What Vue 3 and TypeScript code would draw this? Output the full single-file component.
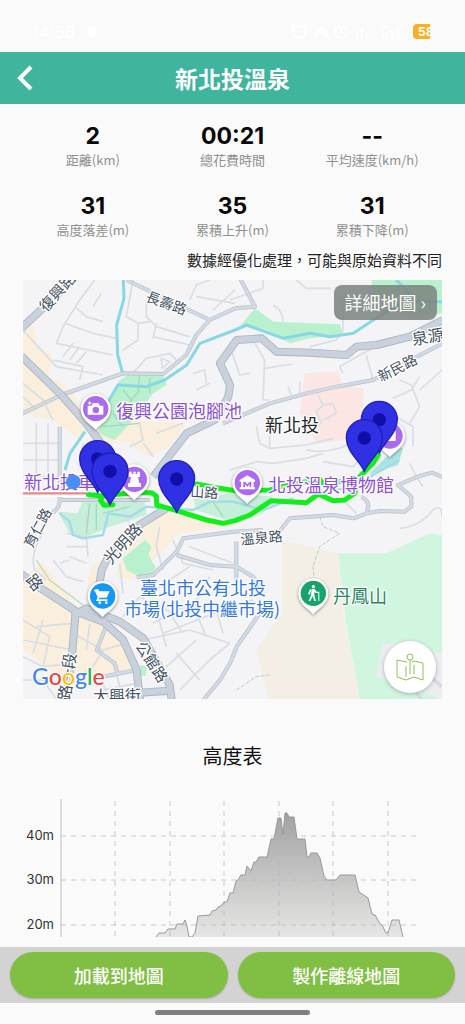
<script setup lang="ts">
interface Stat { value: string; label: string }
interface MapLabel { text: string; x: number; y: number; size: number; angle: number; kind: string }

const stats: Stat[] = [
  { value: '2', label: '距離(km)' },
  { value: '00:21', label: '總花費時間' },
  { value: '--', label: '平均速度(km/h)' },
  { value: '31', label: '高度落差(m)' },
  { value: '35', label: '累積上升(m)' },
  { value: '31', label: '累積下降(m)' },
]

const majorRoads: string[] = [
  'M-5 145L160-10',
  'M-5 228L115 345L190 430L245 505',
  'M1260 120L1161 170L1061 195L1001 200L971 225L861 218L761 215L716 175L641 180L591 250L621 315L616 350L575 420L491 460L391 590',
  'M430 685L341 740L261 820L236 870L228 920',
  'M-5 882L31 910L161 995L241 1025L301 1080L341 1170L351 1260',
  'M158 995L146 1140L128 1260',
  'M161 1000L191 985L291 1025L361 1075L440 1215L446 1260',
  'M351 1238L440 1232',
]

const mediumRoads: string[] = [
  'M-5 402L115 345L300 280L420 282L490 225L520 165L560 120L636 85',
  'M310 0L560 120',
  'M600 430L741 370L851 340L941 320L1051 300L1181 230L1260 190',
  'M1260 592L1226 578L1185 590L1125 615L1165 650L1165 680L1145 695L1071 693L1031 700L991 715L931 705L801 715L765 760',
  'M1031 695Q1045 665 1015 650',
  'M720 750L631 755L481 775L461 815L391 885L341 892',
  'M461 825L560 855L640 860L690 890L720 930',
  'M721 985L641 1100L621 1150L591 1200L541 1260',
  'M636 85L696 80L651 -5',
  'M110 440V660Q110 690 80 702L40 715',
  'M111 660H380',
  'M251 1035L221 1110L275 1150L285 1185',
  'M240 1190L330 1172',
  'M640 785V900',
]

const minorRoads: string[] = [
  'M0 150L100 260L240 285', 'M100 190L125 130L210 160L280 175', 'M120 140L170 60L215 0', 'M155 80L190 110L240 125',
  'M120 230L150 190M140 240L170 200M160 250L190 215', 'M100 190L270 225M90 240L180 260L170 300',
  'M330 0L310 110L345 130V180L300 210', 'M370 60V110L400 140L500 170M390 170L500 195M400 130L390 175', 'M345 130L380 125',
  'M320 290L370 235L440 220L470 250', 'M415 235L440 245L418 265Z', 'M500 60L520 15L560 0', 'M520 50L636 70M570 90L636 30',
  'M510 280L545 270L550 310M520 330L560 310', 'M210 80L235 40', 'M0 310L60 360L90 420M30 380L0 350',
  'M621 200L650 285L680 280M696 190L725 240L720 360M725 265L808 252M720 360H740',
  'M750 75Q780 90 780 125M795 320L805 345M830 305V340M960 280L950 260L1020 220L1060 200M1030 225L1050 300',
  'M621 60L680 40L720 25V0M820 0L850 25H925', 'M960 60V150L940 180L861 200',
  'M885 345L900 375L880 395L895 430L870 445M900 375L930 370L940 400L900 420',
  'M1160 430L1190 380L1165 315L1130 300M1190 330L1257 270M1110 355L1165 330L1190 290',
  'M700 440L710 490L740 505L850 495L930 475M740 440V500M850 510Q930 525 1000 480',
  'M621 570L700 545L750 550L850 535L900 520', 'M1170 500V440L1120 410',
  'M0 490H110M0 540H110M0 590H110M40 430V630M75 430V630',
  'M180 490L170 560M320 500L360 480L350 430M400 460L480 430M391 530L361 490',
  'M60 760Q20 820 35 870L70 900', 'M130 760L190 770L195 830M130 800H195M140 830L190 850M190 700V760',
  'M300 670L320 740M350 670V700', 'M410 740L400 800L420 870M450 780L480 850L570 870M500 800L630 850',
  'M90 840L130 890L180 905M110 850L140 840M290 850L300 940',
  'M361 950L440 900L500 860M300 1010L350 950L450 1000M390 1030L520 960L560 890M420 1060L600 990L690 960',
  'M360 1080L500 1050L620 1090M430 1160L520 1080M460 1120L530 1200M440 1000L480 1060M520 1000L550 1070M580 990L600 1060',
  'M470 1230L560 1140L620 1090M400 990L430 1100',
  'M0 1020L80 1070L60 1160M0 1080L150 1110M40 1040L150 1030M0 1130L60 1160L150 1150M0 1200L60 1200L100 1257',
  'M150 1060L240 1110L210 1160L180 1180M240 1110L310 1090M200 1030L190 1110M60 1020L30 1120',
  'M230 1190L260 1257M280 1180L300 1257M240 1230L340 1210',
  'M1160 550L1180 590L1200 620M1130 745Q1190 740 1230 690Q1257 670 1257 710',
  'M960 660L1000 700M900 545L990 560L1060 490',
]

const mapLabel = (text: string, x: number, y: number, size: number, angle: number, kind: string): MapLabel =>
  ({ text, x, y, size, angle, kind })

const labels: MapLabel[] = [
  mapLabel('復興路', 70, 98, 45, -48, 'road'),
  mapLabel('長壽路', 366, 62, 42, 20, 'road'),
  mapLabel('泉源', 1170, 196, 48, -10, 'road'),
  mapLabel('新民路', 1074, 306, 42, -27, 'road'),
  mapLabel('育仁路', 28, 806, 42, -62, 'road'),
  mapLabel('光明路', 264, 856, 48, -48, 'road'),
  mapLabel('山路', 501, 650, 42, 3, 'road'),
  mapLabel('溫泉路', 654, 794, 42, -5, 'road'),
  mapLabel('路', 6, 900, 48, 50, 'road'),
  mapLabel('公館路', 336, 1098, 45, 57, 'road'),
  mapLabel('路一段', 140, 1264, 48, -82, 'road'),
  mapLabel('大興街', 210, 1266, 48, -1, 'road'),
  mapLabel('新北投', 726, 456, 54, 0, 'town'),
  mapLabel('復興公園泡腳池', 279, 413, 54, 0, 'purple'),
  mapLabel('新北投車', 3, 628, 54, 0, 'purple'),
  mapLabel('北投溫泉博物館', 735, 637, 54, 0, 'purple'),
  mapLabel('臺北市公有北投', 351, 944, 54, 0, 'blue'),
  mapLabel('市場(北投中繼市場)', 303, 1008, 54, 0, 'blue'),
  mapLabel('丹鳳山', 930, 970, 54, 0, 'green'),
]

const pins = [[1069, 520], [1024, 575], [224, 638], [261, 675], [461, 698]]

const profile: number[][] = [
  [156, 937], [159, 933], [165, 933], [168, 929], [175, 929], [177, 924], [183, 924], [185, 920], [187, 926], [189, 937],
  [192, 937], [195, 933], [198, 916], [210, 915], [212, 911], [216, 910], [218, 907], [221, 906], [224, 902], [227, 902],
  [230, 893], [233, 893], [236, 881], [238, 880], [241, 875], [245, 875], [247, 866], [251, 871], [254, 862], [256, 862],
  [259, 857], [267, 857], [269, 848], [271, 839], [274, 839], [278, 818], [281, 818], [283, 835], [285, 813], [287, 813],
  [289, 817], [294, 817], [297, 839], [305, 839], [307, 857], [309, 857], [311, 853], [317, 853], [320, 858], [324, 876],
  [327, 880], [336, 880], [340, 875], [355, 875], [359, 892], [368, 898], [372, 914], [375, 915], [380, 924], [382, 925],
  [386, 933], [388, 933], [392, 920], [399, 920], [403, 937],
]
const linePath = 'M' + profile.map(p => p.join(' ')).join('L')
const gridX = [115, 170, 224, 279, 333, 388]
const gridY = [{ y: 836, label: '40m' }, { y: 880, label: '30m' }, { y: 925, label: '20m' }]
</script>

<template>
  <div class="page" lang="zh-Hant">
    <div class="status">
      <span class="clock">14:56</span>
      <svg class="dot" viewBox="0 0 10 12"><path d="M5 0a5 5 0 0 1 3 9v3H2V9a5 5 0 0 1 3-9z" /></svg>
      <svg class="indicators" viewBox="0 0 116 16" aria-hidden="true">
        <circle cx="8" cy="8" r="6" /><path d="M0 3l4-3M12 0l4 3M24 14l6-11 8 11M24 3l12 11" />
        <circle cx="50" cy="8" r="6" /><path d="M50 4v4l3 2M66 15V9M71 15V3M76 15V9M90 3h8M92 15v-4M96 15V9M101 15V6M107 15V3" />
      </svg>
      <span class="battery">58</span>
    </div>

    <header class="bar">
      <button class="back" type="button" aria-label="返回">
        <svg viewBox="0 0 16 26"><path d="M14 2L3 13l11 11" /></svg>
      </button>
      <h1>新北投溫泉</h1>
    </header>

    <main>
      <dl class="stats">
        <div v-for="s in stats" :key="s.label" class="stat">
          <dt>{{ s.label }}</dt>
          <dd>{{ s.value }}</dd>
        </div>
      </dl>
      <p class="note">數據經優化處理，可能與原始資料不同</p>

      <section class="map" aria-label="地圖">
        <svg class="canvas" viewBox="0 0 1257 1257">
          <rect width="1257" height="1257" fill="#f4f3f5" />
          <g fill="#f9efdc">
            <path d="M0 120L30 125L45 205L90 225L75 285L150 335L200 440L170 480L90 420L0 400z" />
            <path d="M300 420L490 430L440 500L380 530L300 480L240 500L220 450z" />
            <path d="M390 690L640 735L470 760L430 800L330 900L280 890L300 800z" />
            <path d="M60 850L161 985L241 1010L310 1080L330 1170L230 1190L110 1190L0 1110V890z" />
            <path d="M200 860L240 840L225 970L190 950z" />
          </g>
          <path d="M776 780L946 820L961 1000L1010 1257H736L701 1110L776 1000z" fill="#f3efe5" />
          <path d="M946 820H1090L1221 760L1257 766V1257H1011L971 1040z" fill="#d1f6e0" />
          <path d="M1070 1130L1080 1090H1110L1257 1120V1257L1060 1190z" fill="#ecedf0" />
          <path d="M846 280L946 275L956 315L1021 325V435L971 480L881 490L850 440L830 400z" fill="#fce6e3" />
          <g fill="#b9f1cf">
            <path d="M290 300L331 275L421 285L431 315L391 340L321 430L275 480L225 460L240 410L260 355z" />
            <path d="M641 150L696 85L751 125L951 133L961 165L861 175L801 190L731 150L681 135z" />
            <path d="M1046 0H1257V100L1170 110L1050 60z" />
            <path d="M180 660H365L370 705L260 740L180 775L140 760L105 695L165 700z" fill="#c5eedb" />
            <path d="M510 650L640 640L750 650L720 700L610 720L520 690z" fill="#c5eedb" />
            <path d="M300 835L366 780L386 800L376 825L400 865L370 900L310 870z" />
            <path d="M351 1155l20 3l-3 30l-20-3z" />
          </g>
          <path d="M1120 500L1140 505L1125 555L1050 580L1030 590L1090 530z" fill="#a9e4e2" />

          <g class="minor"><path v-for="d in minorRoads" :key="d" :d="d" /></g>
          <g class="park"><path d="M300 330L325 360L350 330M325 360L318 400M380 295V340M350 280L345 330M240 440L350 430M270 400L300 440M200 670L190 760M220 670V750M560 650L600 710M240 700L320 680" /></g>
          <g class="river">
            <path d="M301 0L303 55L281 135L284 225L299 280" />
            <path d="M241 390L285 315L370 320L425 300L491 255L531 190L636 150L671 135L781 175L861 160L921 170L991 160L1051 120L1121 75L1160 65L1257 65M1160 65V40L1120 0" />
            <path d="M186 455L141 520L126 570" />
            <path class="stream" d="M110 700L140 725L150 765L180 775L240 765L256 700L321 710L371 680L421 685L511 690L561 665L631 665L721 690L811 655M880 640L1000 620L1050 585L1130 540" />
          </g>
          <path d="M40 840L80 900L180 975" fill="none" stroke="#bfdcae" stroke-width="4" />
          <g class="trail"><path d="M890 710L900 740L950 760L920 780L890 800L870 860L880 950M640 1230L700 1190L740 1185" /></g>
          <g class="medium-edge"><path v-for="d in mediumRoads" :key="d" :d="d" /></g>
          <g class="medium"><path v-for="d in mediumRoads" :key="d" :d="d" /></g>
          <g class="major-edge"><path v-for="d in majorRoads" :key="d" :d="d" /></g>
          <g class="major"><path v-for="d in majorRoads" :key="d" :d="d" /></g>
          <path d="M1195 1257L1140 1190L1190 1160L1257 1220" fill="none" stroke="#d8dbe1" stroke-width="10" />

          <path d="M0 642H200" fill="none" stroke="#fff" stroke-width="18" />
          <path d="M0 640H200" fill="none" stroke="#ec8484" stroke-width="7" />
          <g class="track">
            <path d="M196 644L240 648L232 660L243 676L270 674M262 644L345 638L385 638L400 648L401 675L461 692L551 720L601 730L636 722L681 705L745 662L850 668L886 642L930 662L965 660L995 640L1010 590L1050 550L1066 525" />
            <path d="M520 612L590 625L636 632L741 630L770 620L890 598L900 610L950 605" />
          </g>

          <g v-for="l in labels" :key="l.text + l.x">
            <text :class="['label', l.kind]" :x="l.x" :y="l.y" :font-size="l.size" :transform="`rotate(${l.angle} ${l.x} ${l.y})`">{{ l.text }}</text>
          </g>

          <circle cx="151" cy="606" r="22" fill="#4690f4" />

          <g class="poi" transform="translate(218 386)">
            <path class="drop" d="M0 64C-12 48-45 34-45 0A45 45 0 1 1 45 0C45 34 12 48 0 64z" /><circle r="38" />
            <path class="glyph" fill-rule="evenodd" d="M-24-9h11l5-8h16l5 8h10v27h-47zM0-6a10 10 0 1 0 1 0zM-18-24l2 5 5 2-5 2-2 5-2-5-5-2 5-2z" />
          </g>
          <g class="poi" transform="translate(334 598)">
            <path class="drop" d="M0 64C-12 48-45 34-45 0A45 45 0 1 1 45 0C45 34 12 48 0 64z" /><circle r="38" />
            <path class="glyph" d="M-16-23h8v7h5v-7h7v7h5v-7h8v16h-6l4 19h5v11h-39v-11h5l4-19h-6z" />
          </g>
          <g class="poi" transform="translate(673 608)">
            <path class="drop" d="M0 64C-12 48-45 34-45 0A45 45 0 1 1 45 0C45 34 12 48 0 64z" /><circle r="38" />
            <path class="glyph" fill-rule="evenodd" d="M-23-8L0-22l23 14v5h-4v17h4v6h-46v-6h4v-17h-4zM-12-3v17h5v-9l7 8 7-8v9h5v-17h-5l-7 8-7-8z" />
          </g>
          <g class="poi" transform="translate(1101 468)">
            <path class="drop" d="M0 64C-12 48-45 34-45 0A45 45 0 1 1 45 0C45 34 12 48 0 64z" /><circle r="38" />
            <path class="glyph" d="M-15-15h32v30h-32z" />
          </g>
          <g class="poi shop" transform="translate(239 948)">
            <path class="drop" d="M0 64C-12 48-45 34-45 0A45 45 0 1 1 45 0C45 34 12 48 0 64z" /><circle r="38" />
            <path class="glyph" d="M-22-20h9l3 6h31L12 5h-21l-3 5h26v5h-34l5-11-8-18h-5z" /><circle class="glyph" cx="-9" cy="20" r="4" /><circle class="glyph" cx="11" cy="20" r="4" />
          </g>
          <g class="poi hike" transform="translate(871 940)">
            <path class="drop" d="M0 64C-12 48-45 34-45 0A45 45 0 1 1 45 0C45 34 12 48 0 64z" /><circle r="38" />
            <circle class="glyph" cx="0" cy="-20" r="5" />
            <path class="glyph" d="M-5-13H4L10-5h8v28h-3V-1H7L3-4v10l5 17H3L-2 9l-7 14h-5L-7 5zM-10-12l-6 14 5 2 5-15z" />
          </g>

          <g v-for="p in pins" :key="p[0]" class="pin" :transform="`translate(${p[0]} ${p[1]})`">
            <path d="M0 0C-10-30-54-58-54-102A54 54 0 1 1 54-102C54-58 10-30 0 0z" />
            <circle cy="-101" r="20" />
          </g>

          <text class="google" x="27" y="1214"><tspan fill="#4285f4">G</tspan><tspan fill="#ea4335">o</tspan><tspan fill="#fbbc05">o</tspan><tspan fill="#4285f4">g</tspan><tspan fill="#34a853">l</tspan><tspan fill="#ea4335">e</tspan></text>
        </svg>
        <button class="detail" type="button">詳細地圖 <span>›</span></button>
        <button class="fab" type="button" aria-label="地圖">
          <svg viewBox="0 0 28 28">
            <path d="M11 9L1 7v17l9 3 8-3 9 3V10l-9-2-2 1M10 13v11M18 12v9M14 7v14" /><circle cx="14" cy="4" r="3" />
          </svg>
        </button>
      </section>

      <h2>高度表</h2>
      <svg class="chart" viewBox="0 795 465 142" role="img" aria-label="高度表">
        <defs>
          <linearGradient id="fill" x1="0" y1="813" x2="0" y2="937" gradientUnits="userSpaceOnUse">
            <stop offset="0" stop-color="#a2a2a2" /><stop offset="1" stop-color="#e6e6e5" />
          </linearGradient>
        </defs>
        <path :d="linePath + 'Z'" fill="url(#fill)" />
        <path :d="linePath" fill="none" stroke="#999" />
        <g class="grid">
          <line v-for="x in gridX" :key="x" :x1="x" y1="801" :x2="x" y2="937" />
          <line v-for="g in gridY" :key="g.y" x1="61" :y1="g.y" x2="420" :y2="g.y" />
        </g>
        <line x1="61" y1="799" x2="61" y2="937" stroke="#bdbdbd" />
        <text v-for="g in gridY" :key="g.label" x="54" :y="g.y + 4" text-anchor="end">{{ g.label }}</text>
      </svg>
    </main>

    <footer>
      <div class="actions">
        <button type="button">加載到地圖</button>
        <button type="button">製作離線地圖</button>
      </div>
      <div class="home"><span></span></div>
    </footer>
  </div>
</template>

<style>
body { margin: 0; background: #fafafa; }
</style>

<style scoped>
.page { display: flex; flex-direction: column; min-height: 100vh; background: #fafafa; color: #111; font-family: "Noto Sans CJK TC", sans-serif; }
button { border: 0; padding: 0; font-family: inherit; cursor: pointer; }
.status { display: flex; align-items: center; height: 52px; box-sizing: border-box; padding: 11px 27px 0 32px; color: #fff; font: 600 16px/20px Inter, sans-serif; }
.dot { width: 10px; height: 12px; margin-left: 12px; fill: #fff; }
.indicators { width: 116px; height: 16px; margin-left: auto; fill: none; stroke: #fff; stroke-width: 2; }
.battery { width: 17px; height: 15px; margin: 0 8px 0 6px; padding-left: 5px; box-sizing: border-box; overflow: hidden; border-radius: 4px 0 0 4px; background: #f8b125; font: 700 12px/15px Inter, sans-serif; }
.bar { display: grid; grid-template-columns: 52px 1fr 52px; align-items: center; height: 52px; background: #3fb59e; color: #fff; }
.back { width: 52px; height: 52px; padding-left: 17px; background: none; text-align: left; }
.back svg { display: block; width: 16px; height: 26px; fill: none; stroke: #fff; stroke-width: 4; }
h1 { margin: 0; font-size: 23px; line-height: 52px; font-weight: 700; text-align: center; }
.stats { display: grid; grid-template-columns: repeat(3, 1fr); gap: 22px 0; margin: 0; padding: 18px 23px 0; }
.stat { display: flex; flex-direction: column-reverse; text-align: center; }
dt { color: #909090; font-size: 13px; line-height: 20px; }
dd { margin: 0; color: #080808; font: 700 23px/28px Inter, sans-serif; }
.note { margin: 10px 23px; color: #222; font-size: 15px; line-height: 20px; text-align: right; }
.map { position: relative; margin: 0 23px; }
.canvas { display: block; width: 100%; overflow: hidden; }
.canvas g { stroke-linejoin: round; }
.minor, .park, .river, .trail, .medium, .medium-edge, .major, .major-edge, .track { fill: none; }
.minor { stroke: #d9dde4; stroke-width: 5; }
.park { stroke: #a5d8bd; stroke-width: 4; }
.river { stroke: #88d7e4; stroke-width: 9; }
.stream { stroke: #a1dce4; stroke-width: 7; }
.trail { stroke: #b9ceca; stroke-width: 3; stroke-dasharray: 12 5; }
.medium-edge { stroke: #b5bfca; stroke-width: 12; }
.medium { stroke: #d3dae3; stroke-width: 8; }
.major-edge { stroke: #a9b4c0; stroke-width: 24; }
.major { stroke: #c8d1dc; stroke-width: 19; }
.track { stroke: #12ee1c; stroke-width: 15; stroke-linecap: round; }
.label { paint-order: stroke; stroke: #fff; stroke-width: 8px; stroke-linejoin: round; }
.road { fill: #465262; font-weight: 400; }
.town { fill: #24272b; font-weight: 400; }
.purple { fill: #8b50d4; }
.blue { fill: #3478dd; }
.green { fill: #28855f; }
.poi .drop { fill: #fff; filter: drop-shadow(0 3px 4px #0006); }
.poi circle { fill: #aa6bf0; }
.shop circle { fill: #1497f6; }
.hike circle { fill: #17a36c; }
.poi .glyph { fill: #fff; }
.pin path { fill: #3030e4; stroke: #2020b4; stroke-width: 4; }
.pin circle { fill: #1010a8; }
.google { font: 500 66px "Open Sans", sans-serif; font-family: Lato, sans-serif; font-size: 69px; paint-order: stroke; stroke: #fff; stroke-width: 7px; }
.detail { position: absolute; top: 5px; right: 5px; height: 35px; padding: 0 11px; border-radius: 8px; background: #7d8582e0; color: #fff; font-size: 18px; line-height: 35px; white-space: nowrap; }
.fab { position: absolute; right: 6px; bottom: 6px; width: 52px; height: 52px; border-radius: 50%; background: #fff; box-shadow: 0 1px 4px #0004; }
.fab svg { display: block; width: 28px; height: 28px; margin: 0 auto; fill: none; stroke: #8cc451; stroke-width: 1; }
h2 { margin: 42px 0 24px; font-size: 20px; line-height: 30px; font-weight: 400; text-align: center; }
.chart { display: block; width: 100%; }
.chart text { fill: #333; font: 400 13px Inter, sans-serif; }
.grid line { stroke: #b5b5b5; stroke-opacity: .7; stroke-dasharray: 5 5; }
footer { margin-top: auto; }
.actions { display: flex; gap: 10px; padding: 5px 10px; background: #d3d3d3; }
.actions button { flex: 1; height: 46px; border-radius: 23px; background: #80bf43; box-shadow: 0 1px 2px #0003; color: #fff; font-size: 18px; font-weight: 500; }
.home { display: flex; justify-content: center; height: 21px; }
.home span { width: 33.3%; height: 5px; margin-top: 7px; border-radius: 3px; background: #808080; }
</style>
